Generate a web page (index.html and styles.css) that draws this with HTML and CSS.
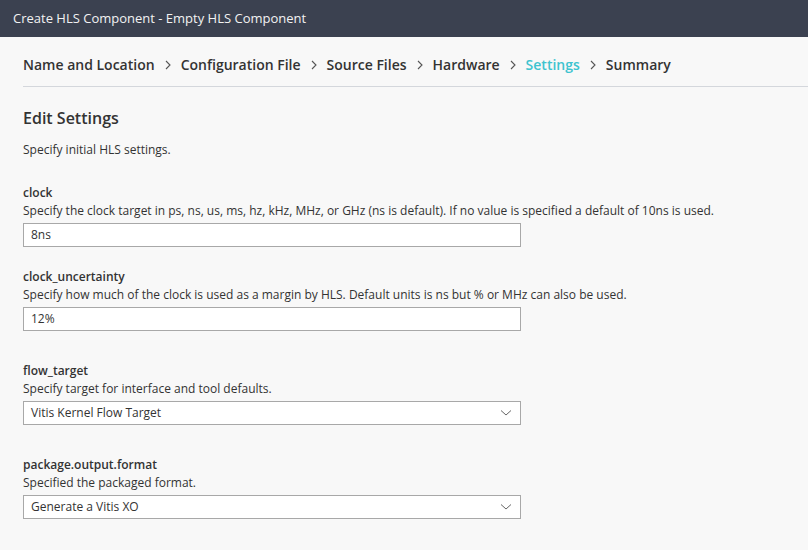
FILE: index.html
```html
<!DOCTYPE html>
<html>
<head>
<meta charset="utf-8">
<link rel="stylesheet" href="styles.css">
</head>
<body>
<div class="titlebar">Create HLS Component - Empty HLS Component</div>
<div class="content">
  <nav class="crumbs">
    <span class="crumb">Name and Location</span>
    <svg class="chev" viewBox="0 0 8 12" width="8" height="12"><path d="M2 2 L6 6 L2 10" fill="none" stroke="#555" stroke-width="1.1"/></svg>
    <span class="crumb">Configuration File</span>
    <svg class="chev" viewBox="0 0 8 12" width="8" height="12"><path d="M2 2 L6 6 L2 10" fill="none" stroke="#555" stroke-width="1.1"/></svg>
    <span class="crumb">Source Files</span>
    <svg class="chev" viewBox="0 0 8 12" width="8" height="12"><path d="M2 2 L6 6 L2 10" fill="none" stroke="#555" stroke-width="1.1"/></svg>
    <span class="crumb">Hardware</span>
    <svg class="chev" viewBox="0 0 8 12" width="8" height="12"><path d="M2 2 L6 6 L2 10" fill="none" stroke="#555" stroke-width="1.1"/></svg>
    <span class="crumb active">Settings</span>
    <svg class="chev" viewBox="0 0 8 12" width="8" height="12"><path d="M2 2 L6 6 L2 10" fill="none" stroke="#555" stroke-width="1.1"/></svg>
    <span class="crumb">Summary</span>
  </nav>
  <h2 class="heading">Edit Settings</h2>
  <p class="intro">Specify initial HLS settings.</p>

  <div class="field">
    <div class="label">clock</div>
    <div class="desc">Specify the clock target in ps, ns, us, ms, hz, kHz, MHz, or GHz (ns is default). If no value is specified a default of 10ns is used.</div>
    <div class="input">8ns</div>
  </div>

  <div class="field">
    <div class="label">clock_uncertainty</div>
    <div class="desc">Specify how much of the clock is used as a margin by HLS. Default units is ns but % or MHz can also be used.</div>
    <div class="input">12%</div>
  </div>

  <div class="field select-field">
    <div class="label">flow_target</div>
    <div class="desc">Specify target for interface and tool defaults.</div>
    <div class="input select"><span>Vitis Kernel Flow Target</span>
      <svg viewBox="0 0 12 8" width="12" height="8"><path d="M1 1.5 L6 6 L11 1.5" fill="none" stroke="#666" stroke-width="1"/></svg>
    </div>
  </div>

  <div class="field select-field">
    <div class="label">package.output.format</div>
    <div class="desc">Specified the packaged format.</div>
    <div class="input select"><span>Generate a Vitis XO</span>
      <svg viewBox="0 0 12 8" width="12" height="8"><path d="M1 1.5 L6 6 L11 1.5" fill="none" stroke="#666" stroke-width="1"/></svg>
    </div>
  </div>
</div>
</body>
</html>
```
FILE: styles.css
```css
html, body {
  margin: 0;
  padding: 0;
  background: #f8f8f8;
  font-family: "Open Sans", "Noto Sans", sans-serif;
  color: #333;
}
.titlebar {
  height: 37px;
  background: #3b4150;
  color: #f2f2f2;
  font-size: 13px;
  line-height: 37px;
  padding-left: 13px;
}
.content {
  padding-left: 23px;
}
.crumbs {
  display: flex;
  align-items: center;
  gap: 9px;
  height: 50px;
  border-bottom: 1px solid #d4d7dc;
  box-sizing: border-box;
  padding-top: 6px;
}
.crumb {
  font-size: 14px;
  font-weight: 600;
  color: #333;
}
.crumb.active {
  color: #3ec3cf;
}
.chev {
  display: block;
}
.heading {
  margin: 20px 0 0;
  font-size: 16px;
  font-weight: 600;
  line-height: 22px;
  color: #333;
}
.intro {
  margin: 12px 0 25px;
  font-size: 12px;
  line-height: 18px;
}
.field {
  width: 498px;
  margin-bottom: 21px;
}
.select-field {
  margin-top: 31px;
}
.label {
  font-size: 12px;
  font-weight: 600;
  line-height: 18px;
}
.desc {
  font-size: 12px;
  line-height: 18px;
  white-space: nowrap;
}
.input {
  margin-top: 3px;
  height: 24px;
  box-sizing: border-box;
  border: 1px solid #a8a8a8;
  background: #fff;
  font-size: 12px;
  line-height: 22px;
  padding: 0 8px 0 7px;
  color: #333;
}
.select {
  display: flex;
  align-items: center;
  justify-content: space-between;
}
```
